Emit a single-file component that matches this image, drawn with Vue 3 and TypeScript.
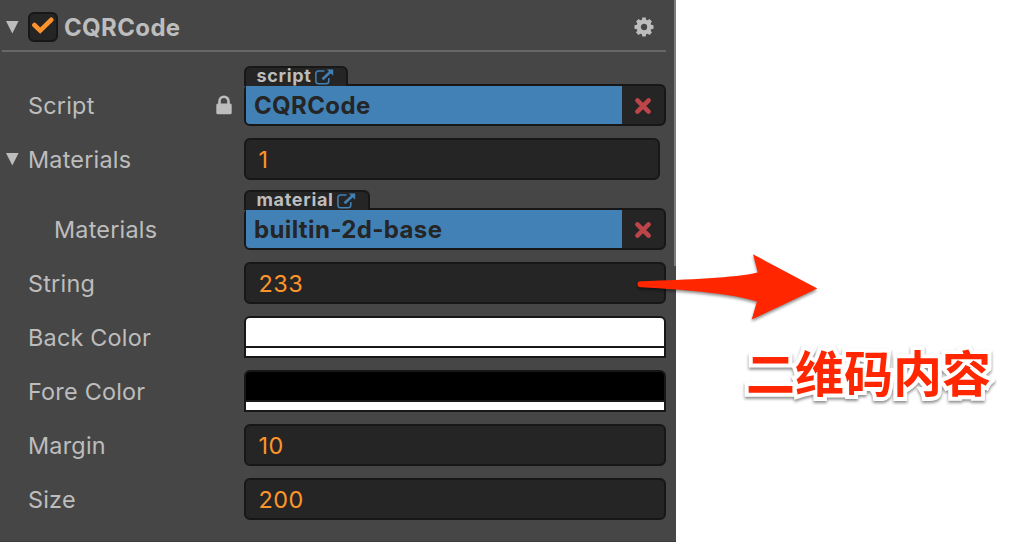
<script setup lang="ts">
interface Row {
  id: string
  label: string
  kind: 'asset' | 'value' | 'color'
  value: string
  type?: string
  locked?: boolean
  foldable?: boolean
  nested?: boolean
}

const rows: Row[] = [
  { id: 'script', label: 'Script', kind: 'asset', value: 'CQRCode', type: 'script', locked: true },
  { id: 'materials', label: 'Materials', kind: 'value', value: '1', foldable: true },
  { id: 'material', label: 'Materials', kind: 'asset', value: 'builtin-2d-base', type: 'material', nested: true },
  { id: 'string', label: 'String', kind: 'value', value: '233' },
  { id: 'back', label: 'Back Color', kind: 'color', value: 'white' },
  { id: 'fore', label: 'Fore Color', kind: 'color', value: 'black' },
  { id: 'margin', label: 'Margin', kind: 'value', value: '10' },
  { id: 'size', label: 'Size', kind: 'value', value: '200' },
]
</script>

<template>
  <main class="screen">
    <section class="panel">
      <header class="head">
        <svg class="fold" width="13" height="13" viewBox="0 0 13 13"><path d="M0 0H12.6L6.3 12.6Z" /></svg>
        <span class="check">
          <svg width="22" height="18" viewBox="0 0 22 18"><path d="M2.4 8L8.2 13.6L19.2 2.8" /></svg>
        </span>
        <h1 class="title">CQRCode</h1>
        <svg class="gear" width="20" height="20" viewBox="0 0 20 20">
          <g>
            <path v-for="n in 8" :key="n" :transform="`rotate(${n * 45} 10 10)`" d="M7.6 4L8.3 .5H11.7L12.4 4Z" />
          </g>
          <circle cx="10" cy="10" r="5.3" />
        </svg>
      </header>

      <div class="rows">
        <div v-for="row in rows" :key="row.id" class="row" :class="[row.id, { nested: row.nested }]">
          <div class="caption">
            <span class="gutter">
              <svg v-if="row.foldable" class="fold" width="13" height="13" viewBox="0 0 13 13"><path d="M0 0H12.6L6.3 12.6Z" /></svg>
            </span>
            <span class="label">{{ row.label }}</span>
            <svg v-if="row.locked" class="lock" width="16" height="20" viewBox="0 0 16 20">
              <rect x="0.3" y="8.5" width="15.4" height="10.7" rx="1.5" />
              <path d="M3.5 9V6.2a4.5 4.5 0 0 1 9 0V9" />
            </svg>
          </div>

          <div v-if="row.kind === 'asset'" class="asset">
            <span class="tab">
              <span class="type">{{ row.type }}</span>
              <svg width="19" height="16" viewBox="0 0 19 16">
                <path class="frame" d="M9.5 2H3.7A2.8 2.8 0 0 0 .9 4.8V12A2.8 2.8 0 0 0 3.7 14.8H11A2.8 2.8 0 0 0 13.8 12V9" />
                <path class="shaft" d="M7.5 10.2L15.6 2.8" />
                <path class="tip" d="M11.8 .5H18.2V6.8Z" />
              </svg>
            </span>
            <span class="name">{{ row.value }}</span>
            <span class="remove">
              <svg width="18" height="18" viewBox="0 0 18 18"><path d="M3.4 3.4L14.6 14.6M14.6 3.4L3.4 14.6" /></svg>
            </span>
          </div>
          <div v-else-if="row.kind === 'color'" class="swatch">
            <span class="tint" :class="row.value"></span>
            <span class="alpha"></span>
          </div>
          <div v-else class="value">{{ row.value }}</div>
        </div>
      </div>
      <span class="scroll"></span>
    </section>

    <svg class="arrow" width="200" height="90" viewBox="630 245 200 90">
      <path d="M640.5 281.2C690 279.500 734 278 757.8 272.5L753 254.3L817.3 288.6L751.7 319.5L757 301.6C735 294 690 290 640.5 287.2A3 3 0 0 1 640.5 281.2Z" />
    </svg>
    <p class="note">二维码内容</p>
  </main>
</template>

<style>
body {
  background: #fff;
}
</style>

<style scoped>
.screen {
  position: relative;
  width: 1014px;
  height: 542px;
  overflow: hidden;
  background: #fff;
  font-family: Inter, "Liberation Sans", sans-serif;
}
.panel {
  position: relative;
  box-sizing: border-box;
  width: 676px;
  height: 542px;
  background: #464646;
  border-bottom: 1px solid #3c3c3c;
  color: #bdbdbd;
}
.head {
  display: flex;
  align-items: center;
  box-sizing: border-box;
  height: 52px;
  margin: 0 10px 0 2px;
  padding: 2px 12.5px 0 4px;
  border-bottom: 2px solid #686868;
}
.fold {
  display: block;
  fill: #bdbdbd;
}
.head .fold {
  margin-top: 2px;
}
.check {
  display: grid;
  place-items: center;
  box-sizing: border-box;
  width: 30px;
  height: 30px;
  margin: 2px 0 0 9px;
  padding-bottom: 2px;
  border: 2px solid #171717;
  border-radius: 6px;
  background: #252525;
}
.check path {
  fill: none;
  stroke: #fd942b;
  stroke-width: 4.6;
  stroke-linecap: round;
}
.title {
  margin: 3px 0 0 6px;
  font-size: 24px;
  font-weight: 700;
  line-height: 30px;
  letter-spacing: 0.35px;
}
.gear {
  margin: 1px 0 0 auto;
  fill: #bdbdbd;
}
.gear circle {
  fill: none;
  stroke: #bdbdbd;
  stroke-width: 4.2;
}
.rows {
  display: flex;
  flex-direction: column;
  gap: 12px;
  padding: 32px 10px 0 0;
}
.row {
  display: grid;
  grid-template-columns: 244px 422px;
  height: 42px;
}
.row.materials .value {
  width: 416px;
}
.row.nested {
  margin-top: 16px;
}
.caption {
  display: flex;
  align-items: center;
  font-size: 23.4px;
  line-height: 42px;
  letter-spacing: 0.22px;
}
.label {
  padding-top: 2px;
  line-height: 40px;
}
.gutter {
  width: 22px;
  padding-left: 6px;
}
.nested .gutter {
  width: 48px;
}
.lock {
  margin: 0 12px 0 auto;
  fill: #bdbdbd;
}
.lock path {
  fill: none;
  stroke: #bdbdbd;
  stroke-width: 2.6;
}
.value,
.asset,
.swatch {
  box-sizing: border-box;
  height: 42px;
  border: 2px solid #171717;
  border-radius: 6px;
  background: #252525;
}
.value {
  padding-left: 12.5px;
  color: #fd942b;
  font-size: 23.4px;
  line-height: 39px;
  letter-spacing: 0.5px;
}
.asset {
  position: relative;
  display: flex;
}
.tab {
  position: absolute;
  left: -2px;
  top: -20px;
  display: flex;
  box-sizing: border-box;
  width: 104px;
  height: 20px;
  padding-left: 10.5px;
  border: 2px solid #171717;
  border-bottom: 0;
  border-radius: 6px 6px 0 0;
  background: #252525;
}
.material .tab {
  width: 126px;
}
.type {
  font-size: 18px;
  font-weight: 700;
  line-height: 16px;
  letter-spacing: 0.68px;
}
.tab svg {
  margin: 1px 0 0 3.5px;
}
.tab .frame {
  fill: none;
  stroke: #4281b6;
  stroke-width: 1.5;
}
.tab .shaft {
  stroke: #4281b6;
  stroke-width: 2.6;
}
.tab .tip {
  fill: #4281b6;
}
.name {
  width: 376px;
  box-sizing: border-box;
  padding-left: 8px;
  border-radius: 0 0 0 4px;
  background: #4281b6;
  color: #252525;
  font-size: 24px;
  font-weight: 700;
  line-height: 39px;
  letter-spacing: 0.36px;
}
.remove {
  display: grid;
  place-items: center;
  width: 42px;
  padding-top: 2px;
}
.remove path {
  stroke: #bd4448;
  stroke-width: 4.6;
  stroke-linecap: round;
}
.swatch {
  display: flex;
  flex-direction: column;
  border-radius: 6px 6px 0 0;
  overflow: hidden;
}
.tint {
  height: 28px;
  border-bottom: 2px solid #171717;
}
.tint.white {
  background: #fff;
}
.tint.black {
  background: #000;
}
.alpha {
  flex: 1;
  background: #fff;
}
.scroll {
  position: absolute;
  top: 0;
  right: 0;
  width: 2px;
  height: 266px;
  background: #7d7d7d;
}
.arrow {
  position: absolute;
  left: 630px;
  top: 245px;
  fill: #ff2600;
  filter: drop-shadow(0 2px 1.5px rgba(0, 0, 0, 0.45));
}
.note {
  position: absolute;
  left: 746px;
  top: 336px;
  margin: 0;
  color: #ff2600;
  font-family: "Noto Sans CJK SC", sans-serif;
  font-size: 49px;
  font-weight: 700;
  line-height: 70px;
  white-space: nowrap;
  paint-order: stroke fill;
  -webkit-text-stroke: 8px #fff;
  stroke-linejoin: round;
  filter: drop-shadow(0 2px 1.5px rgba(0, 0, 0, 0.45));
}
</style>
